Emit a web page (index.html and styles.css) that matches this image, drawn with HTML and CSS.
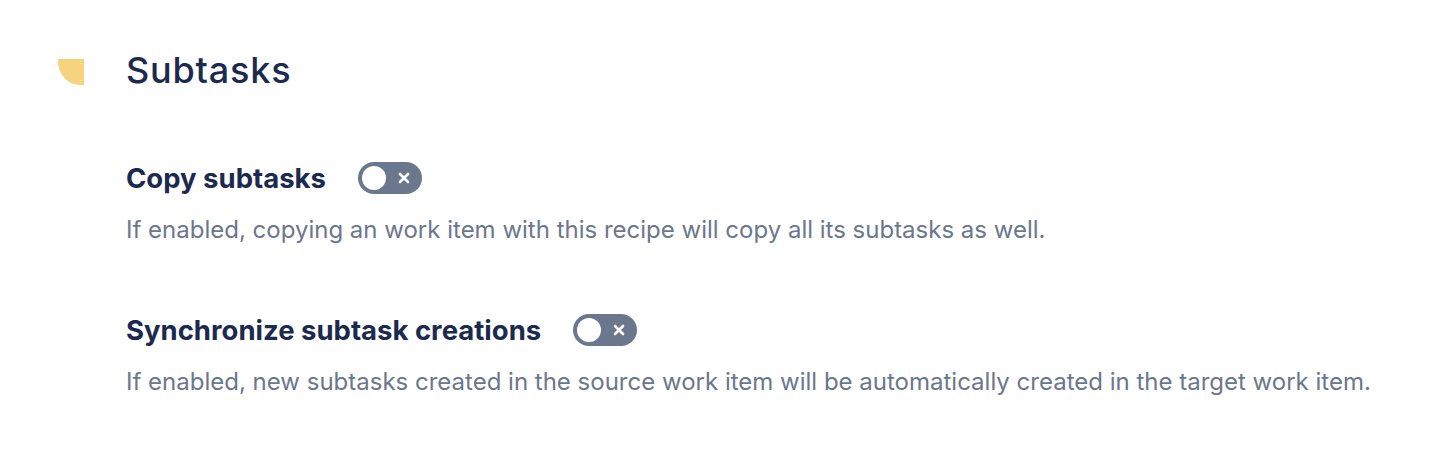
FILE: index.html
```html
<!DOCTYPE html>
<html lang="en">
  <head>
    <meta charset="UTF-8" />
    <meta name="viewport" content="width=device-width, initial-scale=1.0" />
    <title>Subtasks</title>
    <link rel="stylesheet" href="styles.css">
  </head>
  <body>
    <section class="section">
      <div class="section-head">
        <span class="section-mark"></span>
        <h2 class="section-title">Subtasks</h2>
      </div>

      <div class="option">
        <div class="option-row">
          <h3 class="option-title">Copy subtasks</h3>
          <button class="toggle" type="button" aria-pressed="false">
            <span class="toggle-knob"></span>
            <svg class="toggle-icon" viewBox="0 0 14 14" width="14" height="14">
              <path d="M3 3 L11 11 M11 3 L3 11" stroke="#fff" stroke-width="2.6" stroke-linecap="round" />
            </svg>
          </button>
        </div>
        <p class="option-desc">If enabled, copying an work item with this recipe will copy all its subtasks as well.</p>
      </div>

      <div class="option">
        <div class="option-row">
          <h3 class="option-title">Synchronize subtask creations</h3>
          <button class="toggle" type="button" aria-pressed="false">
            <span class="toggle-knob"></span>
            <svg class="toggle-icon" viewBox="0 0 14 14" width="14" height="14">
              <path d="M3 3 L11 11 M11 3 L3 11" stroke="#fff" stroke-width="2.6" stroke-linecap="round" />
            </svg>
          </button>
        </div>
        <p class="option-desc">If enabled, new subtasks created in the source work item will be automatically created in the target work item.</p>
      </div>
    </section>
  </body>
</html>
```

FILE: styles.css
```css
body {
  font-family: Inter, "Noto Sans", Arial, sans-serif;
  background: #fff;
  margin: 0;
  padding: 0;
  color: #172b4d;
}

.section {
  padding: 48px 0 0 58px;
}

.section-head {
  display: flex;
  align-items: center;
  gap: 42px;
}

.section-mark {
  width: 26px;
  height: 26px;
  background: #f6d47e;
  border-bottom-left-radius: 22px 24px;
  margin-top: 3px;
}

.section-title {
  margin: 0;
  font-size: 36px;
  font-weight: 500;
  line-height: 44px;
  letter-spacing: 0.8px;
  color: #1b2a4e;
}

.option {
  margin-left: 68px;
}

.section-head + .option {
  margin-top: 70px;
}

.option + .option {
  margin-top: 68px;
}

.option-row {
  display: flex;
  align-items: center;
  gap: 32px;
}

.option-title {
  margin: 0;
  font-size: 27.5px;
  font-weight: 700;
  line-height: 32px;
  color: #1b2a4e;
}

.option-desc {
  margin: 20px 0 0;
  font-size: 24px;
  line-height: 32px;
  color: #6b778c;
}

.toggle {
  position: relative;
  display: flex;
  align-items: center;
  justify-content: flex-end;
  flex: none;
  width: 64px;
  height: 32px;
  padding: 0 11px 0 0;
  border: none;
  border-radius: 16px;
  background: #6b778c;
  cursor: pointer;
}

.toggle-knob {
  position: absolute;
  left: 4px;
  top: 4px;
  width: 24px;
  height: 24px;
  border-radius: 50%;
  background: #fff;
}
```
